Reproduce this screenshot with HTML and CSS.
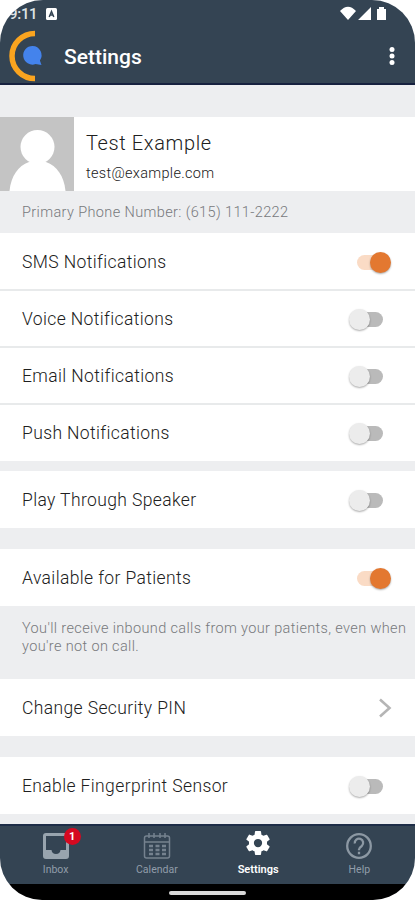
FILE: index.html
```html
<!DOCTYPE html>
<html lang="en">
<head>
<meta charset="utf-8">
<title>Settings</title>
<link rel="stylesheet" href="styles.css">
</head>
<body>
<div class="phone">
  <header class="top">
    <div class="status">
      <span class="time">9:11</span>
      <svg class="app" width="11" height="12" viewBox="0 0 11 12"><rect width="11" height="12" rx="1.500" fill="#fff"/><path d="M3.200 9 5.500 3.500 7.800 9M4 7h3" fill="none" stroke="#344453" stroke-width="1.500"/></svg>
      <svg class="signals" width="50" height="18" viewBox="0 0 50 18"><path fill="#fff" d="M1 8Q9-.5 17 8L9 17ZM32 4v13H19ZM38 6h2V4h5v2h2v11h-9Z"/></svg>
    </div>
    <div class="bar">
      <svg class="logo" width="36" height="54" viewBox="0 0 36 54"><path d="M27 4.500A23 22.500 0 0 0 27 49.500" fill="none" stroke="#faa41f" stroke-width="5.500"/><path d="M24.500 17a9.300 9.300 0 1 0 3 18.100l6 .9-1.600-4.400A9.300 9.300 0 0 0 24.500 17Z" fill="#4483ec"/></svg>
      <h1>Settings</h1>
      <svg class="more" width="6" height="20" viewBox="0 0 6 20"><g fill="#fff"><circle cx="3" cy="3.500" r="2.500"/><circle cx="3" cy="10" r="2.500"/><circle cx="3" cy="16.500" r="2.500"/></g></svg>
    </div>
  </header>
  <main>
    <section class="profile">
      <svg width="74" height="74" viewBox="0 0 74 74"><rect width="74" height="74" fill="#c4c4c4"/><g fill="#fff"><circle cx="37.500" cy="30" r="17"/><path d="M9.500 74C11 59 18 49 29 45H46C57 49 64 59 65.500 74Z"/></g></svg>
      <div class="who"><div class="name">Test Example</div><div class="mail">test@example.com</div></div>
    </section>
    <p class="phone-number">Primary Phone Number: (615) 111-2222</p>
    <section class="group notifications">
      <div class="row"><span>SMS Notifications</span><i class="switch on"></i></div>
      <div class="row"><span>Voice Notifications</span><i class="switch"></i></div>
      <div class="row"><span>Email Notifications</span><i class="switch"></i></div>
      <div class="row"><span>Push Notifications</span><i class="switch"></i></div>
    </section>
    <section class="group speaker"><div class="row"><span>Play Through Speaker</span><i class="switch"></i></div></section>
    <section class="group available"><div class="row"><span>Available for Patients</span><i class="switch on"></i></div></section>
    <p class="note">You'll receive inbound calls from your patients, even when<br>you're not on call.</p>
    <section class="group pin"><div class="row"><span>Change Security PIN</span><svg class="chevron" width="14" height="20" viewBox="0 0 14 20"><path d="M2 1.500 11.500 10 2 18.500" fill="none" stroke="#b5b5b5" stroke-width="2.600"/></svg></div></section>
    <section class="group finger"><div class="row"><span>Enable Fingerprint Sensor</span><i class="switch"></i></div></section>
  </main>
  <nav>
    <a class="tab"><span class="icon"><svg width="28" height="28" viewBox="0 0 28 28"><path fill="#98a4ae" fill-rule="evenodd" d="M4 1H24Q27 1 27 4V24Q27 27 24 27H4Q1 27 1 24V4Q1 1 4 1ZM4 4V18H9.500Q10 22 14 22T18.500 18H24V4Z"/></svg><b class="badge">1</b></span><span>Inbox</span></a>
    <a class="tab calendar"><span class="icon"><svg width="28" height="28" viewBox="0 0 28 28"><g fill="none" stroke="#75828f" stroke-width="1.500"><rect x="1.500" y="4" width="25" height="22" rx="2"/><path d="M1.500 10H26.500M6 1V6M11 1V6M17 1V6M22 1V6"/><path stroke-width="2.300" stroke-dasharray="4 2.500" d="M6 14H23M6 18H23M6 22H23"/></g></svg></span><span>Calendar</span></a>
    <a class="tab active"><span class="icon"><svg width="30" height="30" viewBox="0 0 24 24"><path fill="#fff" d="M19.140 12.940c.04-.3.060-.61.060-.94s-.02-.64-.07-.94l2.030-1.580c.18-.14.230-.41.120-.61l-1.920-3.320c-.12-.22-.37-.29-.59-.22l-2.390.96c-.5-.38-1.030-.7-1.620-.94l-.36-2.540c-.04-.24-.24-.41-.48-.41h-3.840c-.24 0-.43.170-.47.410l-.36 2.540c-.59.240-1.130.570-1.620.940l-2.390-.96c-.22-.08-.47 0-.59.220L2.740 8.870c-.12.210-.08.470.120.610l2.030 1.580c-.05.300-.09.630-.09.940s.02.640.070.940l-2.030 1.580c-.18.140-.23.410-.12.610l1.920 3.320c.12.220.37.290.59.220l2.390-.96c.5.380 1.030.7 1.620.940l.36 2.540c.05.240.24.410.48.410h3.840c.24 0 .44-.17.470-.41l.36-2.540c.59-.24 1.130-.56 1.620-.94l2.390.96c.22.080.47 0 .59-.22l1.920-3.320c.12-.22.070-.47-.12-.61l-2.010-1.580ZM12 15.300a3.300 3.300 0 1 1 0-6.600 3.300 3.300 0 0 1 0 6.600Z"/></svg></span><span>Settings</span></a>
    <a class="tab help"><span class="icon"><svg width="28" height="28" viewBox="0 0 28 28"><g fill="none" stroke="#8c98a3" stroke-width="2.300"><circle cx="14" cy="14" r="11.800"/><path d="M9.800 11.500A4.200 4.200 0 1 1 16.800 14Q14 16 14 17.500V18.300M14 19.800V22.200"/></g></svg></span><span>Help</span></a>
  </nav>
  <footer><i></i></footer>
</div>
</body>
</html>
```
FILE: styles.css
```css
* { box-sizing: border-box; }
body { margin: 0; background: #fff; font-family: Roboto, "Liberation Sans", sans-serif; color: #202020; }
h1, p { margin: 0; }
svg { display: block; flex: none; }
.phone { width: 415px; height: 900px; border-radius: 43px 43px 42px 42px; overflow: hidden; display: flex; flex-direction: column; background: #edeef0; }
.top { height: 85px; background: #344453; border-bottom: 2px solid #17213f; color: #fff; flex: none; }
.status { height: 28px; display: flex; padding-left: 9px; }
.time { font-size: 15px; line-height: 28px; width: 37px; color: #dfe3e6; letter-spacing: -.3px; font-weight: 500; }
.app { margin-top: 8px; }
.signals { margin: 3px 26px 0 auto; }
.bar { height: 56px; display: flex; align-items: center; padding: 0 20px 0 8px; }
h1 { font-size: 21px; font-weight: 500; margin: 2px 0 0 20px; line-height: 28px; }
.more { margin-left: auto; }
main { flex: none; height: 739px; display: flex; flex-direction: column; }
.profile { margin-top: 32px; height: 74px; background: #fff; display: flex; flex: none; }
.who { padding: 14px 0 0 12px; }
.name { font-size: 20px; line-height: 24px; letter-spacing: .62px; font-weight: 350; }
.mail { font-size: 14.5px; line-height: 20px; margin-top: 9px; letter-spacing: .32px; font-weight: 350; }
.phone-number { height: 42px; padding-left: 22px; font-size: 14.5px; line-height: 44px; letter-spacing: .38px; font-weight: 350; color: #77797c; flex: none; }
.group { background: #fff; flex: none; }
.row { height: 57px; display: flex; align-items: center; justify-content: space-between; padding: 1px 23px 0 22px; font-size: 17.5px; letter-spacing: .38px; font-weight: 350; }
.notifications { height: 228px; }
.notifications .row:first-child { height: 56px; padding-top: 2px; }
.notifications .row + .row { border-top: 2px solid #e8eaeb; padding-top: 1px; }
.speaker { margin-top: 10px; }
.available { margin-top: 21px; }
.finger { margin-top: 21px; }
.note { height: 73px; padding: 14px 0 0 22px; font-size: 14.5px; line-height: 18px; letter-spacing: .36px; font-weight: 350; color: #77797c; flex: none; white-space: nowrap; }
.switch { width: 34px; height: 24px; margin: 1px 9px 0 0; display: grid; align-items: center; }
.switch::before, .switch::after { content: ""; grid-area: 1 / 1; }
.switch::before { width: 25px; height: 15px; border-radius: 8px; background: #bababa; justify-self: end; }
.switch::after { width: 21px; height: 21px; border-radius: 50%; background: #ececec; box-shadow: 0 1px 2px #0005; }
.switch.on { margin-right: 1px; }
.switch.on::before { background: #fadbc5; justify-self: start; }
.switch.on::after { background: #e37830; justify-self: end; }
.chevron { margin-right: 0; }
nav { height: 60px; background: #344453; border-top: 2px solid #1d2d47; display: flex; padding: 0 5px; flex: none; }
.tab { flex: 1; display: flex; flex-direction: column; align-items: center; font-size: 10.5px; line-height: 14px; color: #919daa; }
.icon { height: 37px; display: flex; align-items: center; padding-top: 3px; position: relative; }
.badge { position: absolute; left: 22px; top: 2px; width: 17px; height: 17px; border-radius: 50%; background: #d50920; color: #fff; text-align: center; font-size: 11px; line-height: 17px; }
.calendar { font-size: 10.5px; }
.active { color: #fff; font-weight: 600; font-size: 11px; }
.active .icon { padding: 0 0 3px; }
footer { height: 16px; background: #000; flex: none; display: flex; justify-content: center; padding-top: 7px; }
footer i { width: 77px; height: 4px; border-radius: 2px; background: #d9d9d9; }
```
